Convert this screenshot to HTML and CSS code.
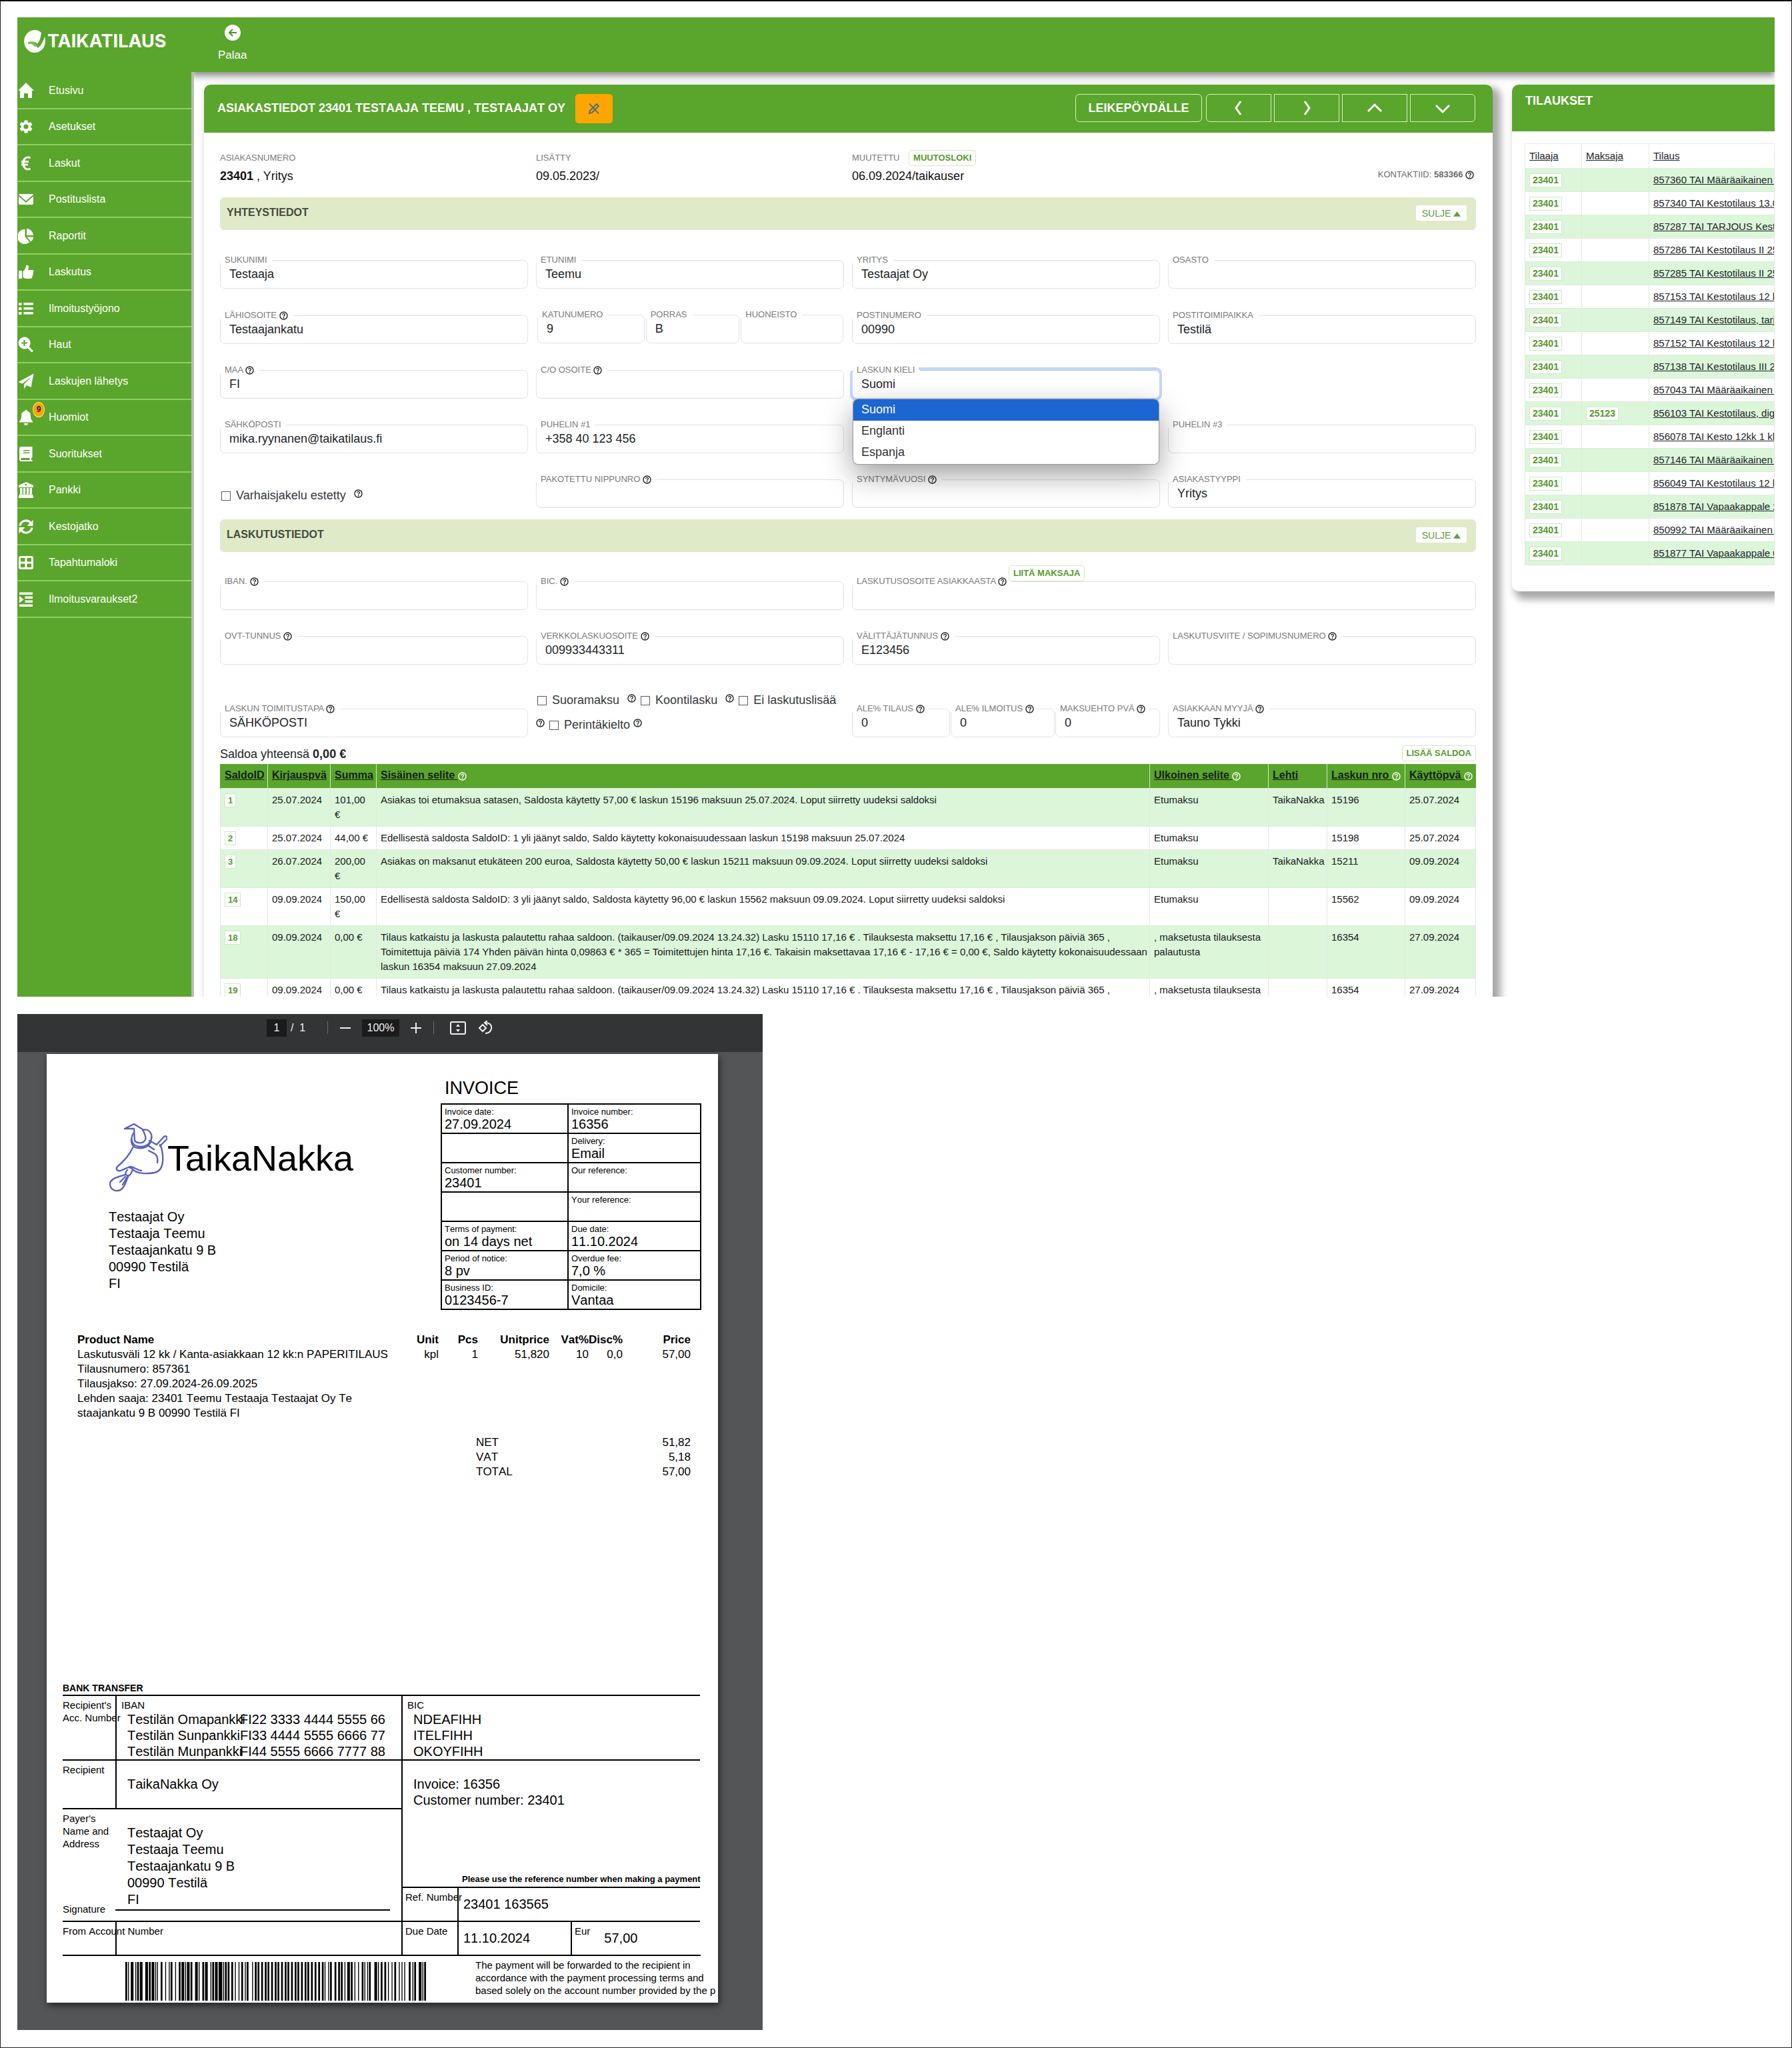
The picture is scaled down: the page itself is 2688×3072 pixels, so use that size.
FILE: index.html
```html
<!DOCTYPE html>
<html lang="fi">
<head>
<meta charset="utf-8">
<title>Taikatilaus – Asiakastiedot</title>
<meta name="viewport" content="width=device-width, initial-scale=1">
<link rel="stylesheet" href="styles.css">
</head>
<body>
<svg class="sprite" aria-hidden="true">
  <symbol id="help" viewBox="0 0 16 16">
    <circle cx="8" cy="8" r="6.8" fill="none" stroke="currentColor" stroke-width="1.7"/>
    <path d="M5.7 6.4c0-3 4.6-3 4.6-.2 0 1.7-2.2 1.6-2.2 3.4" fill="none" stroke="currentColor" stroke-width="1.6"/>
    <circle cx="8.1" cy="11.7" r="1.1" fill="currentColor"/>
  </symbol>
  <symbol id="up" viewBox="0 0 12 8"><path d="M6 0 12 8H0z" fill="currentColor"/></symbol>
</svg>

<div class="frame">
  <div class="app">
    <nav class="sidebar">
      <a class="brand" href="#">
        <svg width="34" height="36" viewBox="0 0 34 36"><path d="M17 1a16 17 0 1 0 13 27c3-4 4-11 2-17-2 6-5 13-10 17-4-6-8-8-15-6 6-5 11-4 14 0 3-4 5-9 6-17A16 17 0 0 0 17 1z" fill="#fff"/><path d="M7 19c5-2 10 0 13 5l-2 3c-3-4-6-6-11-5z" fill="#7fbf5c"/></svg>
        <span>TAIKATILAUS</span>
      </a>
      <ul class="menu">
        <li><a href="#"><svg viewBox="0 0 24 24"><path d="M12 0 24 12h-3v11h-6v-7H9v7H3V12H0z"/></svg>Etusivu</a></li>
        <li><a href="#"><svg viewBox="0 0 24 24"><path d="M19.14 12.94c.04-.3.06-.61.06-.94 0-.32-.02-.64-.07-.94l2.03-1.58a.49.49 0 0 0 .12-.61l-1.92-3.32a.488.488 0 0 0-.59-.22l-2.39.96c-.5-.38-1.03-.7-1.62-.94l-.36-2.54a.484.484 0 0 0-.48-.41h-3.84c-.24 0-.43.17-.47.41l-.36 2.54c-.59.24-1.13.57-1.62.94l-2.39-.96c-.22-.08-.47 0-.59.22L2.74 8.87c-.12.21-.08.47.12.61l2.03 1.58c-.05.3-.09.63-.09.94s.02.64.07.94l-2.03 1.58a.49.49 0 0 0-.12.61l1.92 3.32c.12.22.37.29.59.22l2.39-.96c.5.38 1.03.7 1.62.94l.36 2.54c.05.24.24.41.48.41h3.84c.24 0 .44-.17.47-.41l.36-2.54c.59-.24 1.13-.56 1.62-.94l2.39.96c.22.08.47 0 .59-.22l1.92-3.32c.12-.22.07-.47-.12-.61zM12 15.6a3.6 3.6 0 1 1 0-7.2 3.6 3.6 0 0 1 0 7.2z"/></svg>Asetukset</a></li>
        <li><a href="#"><svg viewBox="0 0 24 24"><path d="M18.500 4c-6-3-10.500 1-10.500 8s5 11 10.500 8M5 9.500h11M5 14h10" fill="none" stroke="#fff" stroke-width="3"/></svg>Laskut</a></li>
        <li><a href="#"><svg viewBox="0 0 24 24"><path d="M1 4h22v1l-11 9.500L1 5z"/><path d="M1 7.500l11 9.500 11-9.500V18a2 2 0 0 1-2 2H3a2 2 0 0 1-2-2z"/></svg>Postituslista</a></li>
        <li><a href="#"><svg viewBox="0 0 24 24"><path d="M10.500 2v11l7 8A11 11 0 1 1 10.500 2z"/><path d="M13 1a10.500 10.500 0 0 1 10 10H13z"/><path d="M13.500 13.500H23c0 3-1.500 5-3.500 7z"/></svg>Raportit</a></li>
        <li><a href="#"><svg viewBox="0 0 24 24"><path d="M1 10h5v12H1z"/><path d="M7.500 11c3-2 4-5 4.500-8 .3-2 4-2 4 1.500 0 2-.5 3-1 4.500h6.500c2 0 2.500 2.500 1 3.500 1 1 .8 2.600-.5 3.300.6 1.200.2 2.400-.8 3 .4 2-.7 3.200-2.700 3.200H13c-2.500 0-3.500-1-5.500-2z"/></svg>Laskutus</a></li>
        <li><a href="#"><svg viewBox="0 0 24 24"><path d="M1 3h4.500v4H1zm7.500 0H23v3.500H8.500zM1 10h4.500v4H1zm7.500 0H23v3.500H8.500zM1 17h4.500v4H1zm7.500 0H23v3.500H8.500z"/></svg>Ilmoitustyöjono</a></li>
        <li><a href="#"><svg viewBox="0 0 24 24"><path d="M9.500.5a9 9 0 0 1 7.200 14.400l6.300 6.300-2.300 2.300-6.300-6.300A9 9 0 1 1 9.500.5zM8.500 5v3.500H5v2h3.500V14h2v-3.500H14v-2h-3.500V5z"/></svg>Haut</a></li>
        <li><a href="#"><svg viewBox="0 0 24 24"><path d="M23.500.500 19.500 21l-6.500-3-4 5.500v-7L20 5 6.500 15.500.5 13z"/></svg>Laskujen lähetys</a></li>
        <li><a href="#"><svg viewBox="0 0 24 24"><path d="M10.500 1h3v1.500c4 1 5.500 4 5.500 7.500 0 4 1 6 3 8v1.500H2V18c2-2 3-4 3-8 0-3.500 1.500-6.500 5.500-7.500zM9 21h6a3 3 0 0 1-6 0z"/></svg>Huomiot<span class="badge">9</span></a></li>
        <li><a href="#"><svg viewBox="0 0 24 24"><path d="M5 1h16.500v16l-1.500 1v3h1.500v2H5a3 3 0 0 1-3-3V4a3 3 0 0 1 3-3zm3 5v1.500h9.500V6zm0 3.500V11h9.500V9.500zM5.500 18a1.400 1.400 0 0 0 0 3H17.500v-3z" fill-rule="evenodd"/></svg>Suoritukset</a></li>
        <li><a href="#"><svg viewBox="0 0 24 24"><path d="M12 0 23 5v3H1V5zm0 3a1.300 1.300 0 1 0 0 2.600A1.300 1.300 0 0 0 12 3zM3 9h3.500v9H3zm4.900 0h3.200v9H7.900zm5 0h3.200v9h-3.200zm4.600 0H21v9h-3.500zM2 18.500h20V21H2zm-1 2h22V24H1z"/></svg>Pankki</a></li>
        <li><a href="#"><svg viewBox="0 0 24 24"><path d="M3 10.500A9 9 0 0 1 19 6.500M21 13.500a9 9 0 0 1-16 4" fill="none" stroke="#fff" stroke-width="3.200"/><path d="M22.500 2v9h-9zM1.500 22v-9h9z"/></svg>Kestojatko</a></li>
        <li><a href="#"><svg viewBox="0 0 24 24"><path d="M4 2h16a3 3 0 0 1 3 3v14a3 3 0 0 1-3 3H4a3 3 0 0 1-3-3V5a3 3 0 0 1 3-3zm0 3v5.500h6.500V5zm9.500 0v5.500H20V5zM4 13.500V19h6.500v-5.500zm9.500 0V19H20v-5.500z" fill-rule="evenodd"/></svg>Tapahtumaloki</a></li>
        <li><a href="#"><svg viewBox="0 0 24 24"><path d="M2 1.500h20v3.500H2zm8.500 6H22v3.500H10.500zm0 6H22V17H10.500zM2 19.500h20V23H2zM2 7l6.500 5.200L2 17.500z"/></svg>Ilmoitusvaraukset2</a></li>
      </ul>
    </nav>

    <div class="main">
      <header class="topbar">
        <a class="back" href="#">
          <svg width="24" height="24" viewBox="0 0 24 24"><circle cx="12" cy="12" r="12" fill="#fff"/><path d="M18 12H7M12 7l-5 5 5 5" fill="none" stroke="#4d9127" stroke-width="2"/></svg>
          Palaa
        </a>
      </header>

      <div class="cards">
        <section class="card">
          <header class="card-head">
            <h1>ASIAKASTIEDOT 23401 TESTAAJA TEEMU , TESTAAJAT OY</h1>
            <button class="edit" type="button" aria-label="Muokkaa"><svg width="18" height="18" viewBox="0 0 18 18"><path d="M2 1.500 16 16.500M2 16l1-4L13 2l3 3L6 15z" fill="none" stroke="#3f6a80" stroke-width="1.800"/></svg></button>
            <div class="head-actions">
              <button class="clip" type="button">LEIKEPÖYDÄLLE</button>
              <button class="step" type="button" aria-label="Edellinen"><svg viewBox="0 0 22 22"><path d="M14 1 7 11l7 10"/></svg></button>
              <button class="step" type="button" aria-label="Seuraava"><svg viewBox="0 0 22 22"><path d="m8 1 7 10-7 10"/></svg></button>
              <button class="step" type="button" aria-label="Ylös"><svg viewBox="0 0 22 22"><path d="m1 16 10-10 10 10"/></svg></button>
              <button class="step" type="button" aria-label="Alas"><svg viewBox="0 0 22 22"><path d="m1 7 10 10L21 7"/></svg></button>
            </div>
          </header>

          <div class="card-body">
            <div class="grid info">
              <div><p class="tag">ASIAKASNUMERO</p><p class="val"><b>23401</b> , Yritys</p></div>
              <div><p class="tag">LISÄTTY</p><p class="val">09.05.2023/</p></div>
              <div><p class="tag">MUUTETTU <button class="mini" type="button">MUUTOSLOKI</button></p><p class="val">06.09.2024/taikauser</p></div>
              <p class="tag contact">KONTAKTIID: <b>583366</b> <svg class="q"><use href="#help"/></svg></p>
            </div>

            <div class="bar"><h2>YHTEYSTIEDOT</h2><button class="sulje" type="button">SULJE <svg><use href="#up"/></svg></button></div>

            <div class="grid">
              <fieldset><legend><label for="f1">SUKUNIMI</label></legend><input id="f1" value="Testaaja"></fieldset>
              <fieldset><legend><label for="f2">ETUNIMI</label></legend><input id="f2" value="Teemu"></fieldset>
              <fieldset><legend><label for="f3">YRITYS</label></legend><input id="f3" value="Testaajat Oy"></fieldset>
              <fieldset><legend><label for="f4">OSASTO</label></legend><input id="f4"></fieldset>

              <fieldset><legend><label for="f5">LÄHIOSOITE</label> <svg class="q"><use href="#help"/></svg></legend><input id="f5" value="Testaajankatu"></fieldset>
              <div class="trio street">
                <fieldset><legend><label for="f6">KATUNUMERO</label></legend><input id="f6" value="9"></fieldset>
                <fieldset><legend><label for="f7">PORRAS</label></legend><input id="f7" value="B"></fieldset>
                <fieldset><legend><label for="f8">HUONEISTO</label></legend><input id="f8"></fieldset>
              </div>
              <fieldset><legend><label for="f9">POSTINUMERO</label></legend><input id="f9" value="00990"></fieldset>
              <fieldset><legend><label for="f10">POSTITOIMIPAIKKA</label></legend><input id="f10" value="Testilä"></fieldset>

              <fieldset><legend><label for="f11">MAA</label> <svg class="q"><use href="#help"/></svg></legend><input id="f11" value="FI"></fieldset>
              <fieldset><legend><label for="f12">C/O OSOITE</label> <svg class="q"><use href="#help"/></svg></legend><input id="f12"></fieldset>
              <fieldset class="open"><legend><label for="f13">LASKUN KIELI</label></legend>
                <select id="f13"><option>Suomi</option></select>
                <ul class="options" role="listbox">
                  <li role="option" aria-selected="true">Suomi</li>
                  <li role="option">Englanti</li>
                  <li role="option">Espanja</li>
                </ul>
              </fieldset>

              <fieldset class="first"><legend><label for="f14">SÄHKÖPOSTI</label></legend><input id="f14" value="mika.ryynanen@taikatilaus.fi"></fieldset>
              <fieldset><legend><label for="f15">PUHELIN #1</label></legend><input id="f15" value="+358 40 123 456"></fieldset>
              <fieldset class="last"><legend><label for="f16">PUHELIN #3</label></legend><input id="f16"></fieldset>

              <div class="checks"><label><input type="checkbox"> Varhaisjakelu estetty</label> <svg class="q far"><use href="#help"/></svg></div>
              <fieldset><legend><label for="f17">PAKOTETTU NIPPUNRO</label> <svg class="q"><use href="#help"/></svg></legend><input id="f17"></fieldset>
              <fieldset><legend><label for="f18">SYNTYMÄVUOSI</label> <svg class="q"><use href="#help"/></svg></legend><input id="f18"></fieldset>
              <fieldset><legend><label for="f19">ASIAKASTYYPPI</label></legend><input id="f19" value="Yritys"></fieldset>
            </div>

            <div class="bar second"><h2>LASKUTUSTIEDOT</h2><button class="sulje" type="button">SULJE <svg><use href="#up"/></svg></button></div>

            <div class="grid">
              <fieldset><legend><label for="g1">IBAN.</label> <svg class="q"><use href="#help"/></svg></legend><input id="g1"></fieldset>
              <fieldset><legend><label for="g2">BIC.</label> <svg class="q"><use href="#help"/></svg></legend><input id="g2"></fieldset>
              <fieldset class="wide"><legend><label for="g3">LASKUTUSOSOITE ASIAKKAASTA</label> <svg class="q"><use href="#help"/></svg></legend><button class="mini payer" type="button">LIITÄ MAKSAJA</button><input id="g3"></fieldset>

              <fieldset><legend><label for="g4">OVT-TUNNUS</label> <svg class="q"><use href="#help"/></svg></legend><input id="g4"></fieldset>
              <fieldset><legend><label for="g5">VERKKOLASKUOSOITE</label> <svg class="q"><use href="#help"/></svg></legend><input id="g5" value="009933443311"></fieldset>
              <fieldset><legend><label for="g6">VÄLITTÄJÄTUNNUS</label> <svg class="q"><use href="#help"/></svg></legend><input id="g6" value="E123456"></fieldset>
              <fieldset><legend><label for="g7">LASKUTUSVIITE / SOPIMUSNUMERO</label> <svg class="q"><use href="#help"/></svg></legend><input id="g7"></fieldset>

              <fieldset><legend><label for="g8">LASKUN TOIMITUSTAPA</label> <svg class="q"><use href="#help"/></svg></legend><input id="g8" value="SÄHKÖPOSTI"></fieldset>
              <div class="checks terms">
                <label><input type="checkbox"> Suoramaksu</label> <svg class="q far"><use href="#help"/></svg>
                <label><input type="checkbox"> Koontilasku</label> <svg class="q far"><use href="#help"/></svg>
                <label><input type="checkbox"> Ei laskutuslisää</label> <svg class="q"><use href="#help"/></svg>
                <label><input type="checkbox"> Perintäkielto</label> <svg class="q"><use href="#help"/></svg>
              </div>
              <div class="trio rates">
                <fieldset><legend><label for="g9">ALE% TILAUS</label> <svg class="q"><use href="#help"/></svg></legend><input id="g9" value="0"></fieldset>
                <fieldset><legend><label for="g10">ALE% ILMOITUS</label> <svg class="q"><use href="#help"/></svg></legend><input id="g10" value="0"></fieldset>
                <fieldset><legend><label for="g11">MAKSUEHTO PVÄ</label> <svg class="q"><use href="#help"/></svg></legend><input id="g11" value="0"></fieldset>
              </div>
              <fieldset><legend><label for="g12">ASIAKKAAN MYYJÄ</label> <svg class="q"><use href="#help"/></svg></legend><input id="g12" value="Tauno Tykki"></fieldset>
            </div>

            <div class="saldo-line"><p>Saldoa yhteensä <b>0,00 €</b></p><button class="mini" type="button">LISÄÄ SALDOA</button></div>

            <table class="saldo">
              <colgroup><col class="c1"><col class="c2"><col class="c3"><col><col class="c5"><col class="c6"><col class="c7"><col class="c8"></colgroup>
              <thead><tr>
                <th><a href="#">SaldoID</a></th><th><a href="#">Kirjauspvä</a></th><th><a href="#">Summa</a></th>
                <th><a href="#">Sisäinen selite </a><svg class="q"><use href="#help"/></svg></th>
                <th><a href="#">Ulkoinen selite </a><svg class="q"><use href="#help"/></svg></th>
                <th><a href="#">Lehti</a></th>
                <th><a href="#">Laskun nro </a><svg class="q"><use href="#help"/></svg></th>
                <th><a href="#">Käyttöpvä </a><svg class="q"><use href="#help"/></svg></th>
              </tr></thead>
              <tbody>
                <tr><td><a class="id" href="#">1</a></td><td>25.07.2024</td><td>101,00 €</td><td>Asiakas toi etumaksua satasen, Saldosta käytetty 57,00 € laskun 15196 maksuun 25.07.2024. Loput siirretty uudeksi saldoksi</td><td>Etumaksu</td><td>TaikaNakka</td><td>15196</td><td>25.07.2024</td></tr>
                <tr><td><a class="id" href="#">2</a></td><td>25.07.2024</td><td>44,00 €</td><td>Edellisestä saldosta SaldoID: 1 yli jäänyt saldo, Saldo käytetty kokonaisuudessaan laskun 15198 maksuun 25.07.2024</td><td>Etumaksu</td><td></td><td>15198</td><td>25.07.2024</td></tr>
                <tr><td><a class="id" href="#">3</a></td><td>26.07.2024</td><td>200,00 €</td><td>Asiakas on maksanut etukäteen 200 euroa, Saldosta käytetty 50,00 € laskun 15211 maksuun 09.09.2024. Loput siirretty uudeksi saldoksi</td><td>Etumaksu</td><td>TaikaNakka</td><td>15211</td><td>09.09.2024</td></tr>
                <tr><td><a class="id" href="#">14</a></td><td>09.09.2024</td><td>150,00 €</td><td>Edellisestä saldosta SaldoID: 3 yli jäänyt saldo, Saldosta käytetty 96,00 € laskun 15562 maksuun 09.09.2024. Loput siirretty uudeksi saldoksi</td><td>Etumaksu</td><td></td><td>15562</td><td>09.09.2024</td></tr>
                <tr><td><a class="id" href="#">18</a></td><td>09.09.2024</td><td>0,00 €</td><td class="long">Tilaus katkaistu ja laskusta palautettu rahaa saldoon. (taikauser/09.09.2024 13.24.32) Lasku 15110 17,16 € . Tilauksesta maksettu 17,16 € , Tilausjakson päiviä 365 ,<br>Toimitettuja päiviä 174 Yhden päivän hinta 0,09863 € * 365 = Toimitettujen hinta 17,16 €. Takaisin maksettavaa 17,16 € - 17,16 € = 0,00 €, Saldo käytetty kokonaisuudessaan<br>laskun 16354 maksuun 27.09.2024</td><td>, maksetusta tilauksesta palautusta</td><td></td><td>16354</td><td>27.09.2024</td></tr>
                <tr><td><a class="id" href="#">19</a></td><td>09.09.2024</td><td>0,00 €</td><td class="long">Tilaus katkaistu ja laskusta palautettu rahaa saldoon. (taikauser/09.09.2024 13.24.32) Lasku 15110 17,16 € . Tilauksesta maksettu 17,16 € , Tilausjakson päiviä 365 ,</td><td class="long">, maksetusta tilauksesta</td><td></td><td>16354</td><td>27.09.2024</td></tr>
              </tbody>
            </table>
          </div>
        </section>

        <section class="card orders">
          <header class="card-head"><h1>TILAUKSET</h1></header>
          <div class="orders-body">
            <table class="order-list">
              <colgroup><col class="o1"><col class="o2"><col></colgroup>
              <thead><tr><th><a href="#">Tilaaja</a></th><th><a href="#">Maksaja</a></th><th><a href="#">Tilaus</a></th></tr></thead>
              <tbody>
                <tr><td><a class="id" href="#">23401</a></td><td></td><td><a href="#">857360 TAI Määräaikainen 1</a></td></tr>
                <tr><td><a class="id" href="#">23401</a></td><td></td><td><a href="#">857340 TAI Kestotilaus 13.0</a></td></tr>
                <tr><td><a class="id" href="#">23401</a></td><td></td><td><a href="#">857287 TAI TARJOUS Kest</a></td></tr>
                <tr><td><a class="id" href="#">23401</a></td><td></td><td><a href="#">857286 TAI Kestotilaus II 25</a></td></tr>
                <tr><td><a class="id" href="#">23401</a></td><td></td><td><a href="#">857285 TAI Kestotilaus II 25</a></td></tr>
                <tr><td><a class="id" href="#">23401</a></td><td></td><td><a href="#">857153 TAI Kestotilaus 12 k</a></td></tr>
                <tr><td><a class="id" href="#">23401</a></td><td></td><td><a href="#">857149 TAI Kestotilaus, tarj</a></td></tr>
                <tr><td><a class="id" href="#">23401</a></td><td></td><td><a href="#">857152 TAI Kestotilaus 12 k</a></td></tr>
                <tr><td><a class="id" href="#">23401</a></td><td></td><td><a href="#">857138 TAI Kestotilaus III 2</a></td></tr>
                <tr><td><a class="id" href="#">23401</a></td><td></td><td><a href="#">857043 TAI Määräaikainen 1</a></td></tr>
                <tr><td><a class="id" href="#">23401</a></td><td><a class="id" href="#">25123</a></td><td><a href="#">856103 TAI Kestotilaus, digi</a></td></tr>
                <tr><td><a class="id" href="#">23401</a></td><td></td><td><a href="#">856078 TAI Kesto 12kk 1 kk</a></td></tr>
                <tr><td><a class="id" href="#">23401</a></td><td></td><td><a href="#">857146 TAI Määräaikainen 1</a></td></tr>
                <tr><td><a class="id" href="#">23401</a></td><td></td><td><a href="#">856049 TAI Kestotilaus 12 k</a></td></tr>
                <tr><td><a class="id" href="#">23401</a></td><td></td><td><a href="#">851878 TAI Vapaakappale 2</a></td></tr>
                <tr><td><a class="id" href="#">23401</a></td><td></td><td><a href="#">850992 TAI Määräaikainen 1</a></td></tr>
                <tr><td><a class="id" href="#">23401</a></td><td></td><td><a href="#">851877 TAI Vapaakappale 0</a></td></tr>
              </tbody>
            </table>
          </div>
        </section>
      </div>
    </div>
  </div>

  <div class="viewer">
    <div class="toolbar">
      <input class="page-no" value="1" aria-label="Page"><span class="of">/&nbsp; 1</span>
      <i class="sep"></i>
      <button type="button" aria-label="Zoom out"><svg width="16" height="16" viewBox="0 0 16 16"><path d="M0 8h16"/></svg></button>
      <span class="zoom">100%</span>
      <button type="button" aria-label="Zoom in"><svg width="16" height="16" viewBox="0 0 16 16"><path d="M0 8h16M8 0v16"/></svg></button>
      <i class="sep"></i>
      <button class="fit" type="button" aria-label="Fit to page"><svg width="24" height="20" viewBox="0 0 24 20"><rect x="1" y="1" width="22" height="18" rx="2"/><path d="m9 8 3-4 3 4zM9 12l3 4 3-4z" fill="#f1f1f1" stroke="none"/></svg></button>
      <button type="button" aria-label="Rotate"><svg width="22" height="22" viewBox="0 0 22 22"><path d="m7 6 5 5-5 5-5-5zM11 3c6 0 10 3 9 9-1 4-4 7-9 7M14 0l-4 3 4 4"/></svg></button>
    </div>
    <div class="desk">
      <article class="paper">
        <div class="top">
          <div class="sender">
            <div class="logo">
              <svg width="88" height="104" viewBox="0 0 88 104" fill="none" stroke="#5c62c0" stroke-width="2.400" stroke-linejoin="round" stroke-linecap="round">
                <path d="M24 8 38 1l13 8c4 10 6 13 3 17-4 5-12 4-15 0L38 8z"/>
                <path d="M37 15c-6 10-1 20 11 20 14 0 20-14 14-22-3-4-8-4-11-3M34 24c-1 9 5 15 17 13 9-2 13-8 13-16"/>
                <path d="M37 35C31 48 24 56 13 65c-3 4 0 7 5 6 10-4 13-8 18-2 6 7 22 7 33 5 12-3 13-16 12-27-1-8-2-12-4-15"/>
                <path d="m61 26 11 6 11-12c3-2 6 1 4 4L77 34M60 34c3 1 5 4 8 5M60 41c9 4 15 6 13 18M31 65c8 0 12 6 18 6"/>
                <path d="M28 70c-2 2-4 4-2 7 3 3 7 1 8-3l2-4M25 77C14 80 2 83 2 91c0 6 5 11 12 10 9-1 11-12 16-23M25 80l-8 8M28 80l-7 12"/>
              </svg>
              <span>TaikaNakka</span>
            </div>
            <address>Testaajat Oy<br>Testaaja Teemu<br>Testaajankatu 9 B<br>00990 Testilä<br>FI</address>
          </div>
          <div class="facts-wrap">
            <h2>INVOICE</h2>
            <table class="facts">
              <tr><td><small>Invoice date:</small>27.09.2024</td><td><small>Invoice number:</small>16356</td></tr>
              <tr><td></td><td><small>Delivery:</small>Email</td></tr>
              <tr><td><small>Customer number:</small>23401</td><td><small>Our reference:</small></td></tr>
              <tr><td></td><td><small>Your reference:</small></td></tr>
              <tr><td><small>Terms of payment:</small>on 14 days net</td><td><small>Due date:</small>11.10.2024</td></tr>
              <tr><td><small>Period of notice:</small>8 pv</td><td><small>Overdue fee:</small>7,0 %</td></tr>
              <tr><td><small>Business ID:</small>0123456-7</td><td><small>Domicile:</small>Vantaa</td></tr>
            </table>
          </div>
        </div>

        <table class="lines">
          <colgroup><col><col class="l2"><col class="l3"><col class="l4"><col class="l5"><col class="l6"><col class="l7"></colgroup>
          <thead><tr><th>Product Name</th><th>Unit</th><th>Pcs</th><th>Unitprice</th><th>Vat%</th><th>Disc%</th><th>Price</th></tr></thead>
          <tbody><tr><td>Laskutusväli 12 kk / Kanta-asiakkaan 12 kk:n PAPERITILAUS<br>Tilausnumero: 857361<br>Tilausjakso: 27.09.2024-26.09.2025<br>Lehden saaja: 23401 Teemu Testaaja Testaajat Oy Te<br>staajankatu 9 B 00990 Testilä FI</td><td>kpl</td><td>1</td><td>51,820</td><td>10</td><td>0,0</td><td>57,00</td></tr></tbody>
        </table>
        <dl class="totals"><dt>NET</dt><dd>51,82</dd><dt>VAT</dt><dd>5,18</dd><dt>TOTAL</dt><dd>57,00</dd></dl>

        <h3 class="slip-title">BANK TRANSFER</h3>
        <div class="slip">
          <div class="left">
            <div class="row accounts">
              <p class="cap">Recipient's<br>Acc. Number</p>
              <div class="cell"><p class="cap">IBAN</p>
                <div class="banks"><span>Testilän Omapankki</span><span>FI22 3333 4444 5555 66</span><span>Testilän Sunpankki</span><span>FI33 4444 5555 6666 77</span><span>Testilän Munpankki</span><span>FI44 5555 6666 7777 88</span></div>
              </div>
            </div>
            <div class="row recipient"><p class="cap">Recipient</p><div class="cell">TaikaNakka Oy</div></div>
            <div class="row payer-row">
              <p class="cap">Payer's<br>Name and<br>Address</p>
              <address>Testaajat Oy<br>Testaaja Teemu<br>Testaajankatu 9 B<br>00990 Testilä<br>FI</address>
              <p class="cap sign">Signature</p><i class="sign-line"></i>
            </div>
            <div class="row from"><p class="cap">From Account Number</p><div class="cell"></div></div>
          </div>
          <div class="right">
            <div class="bic"><p class="cap">BIC</p><p class="codes">NDEAFIHH<br>ITELFIHH<br>OKOYFIHH</p></div>
            <div class="msg"><p>Invoice: 16356<br>Customer number: 23401</p><strong>Please use the reference number when making a payment</strong></div>
            <div class="pay"><p class="cap">Ref. Number</p><div class="cell">23401 163565</div></div>
            <div class="pay due"><p class="cap">Due Date</p><div class="cell">11.10.2024</div><div class="cell eur"><span class="cap">Eur</span>57,00</div></div>
          </div>
        </div>
        <div class="foot">
          <svg class="barcode" viewBox="0 0 332 10" preserveAspectRatio="none" role="img" aria-label="Virtual bar code"><path d="M0 5H332" stroke="#000" stroke-width="10" stroke-dasharray="2 1 1 2 3 2 1 1 2 1 3 3 3 1 2 1 3 1 1 1 1 3 2 3 1 3 1 1 2 3 1 3 2 1 3 1 1 1 3 1 2 3 3 1 1 3 2 1 3 3 1 1 2 1 3 1 4 1 1 1 2 1 2 2 2 2 1 3 1 2 2 2 1 1 2 4 1 2 2 1 2 2 2 2 2 1 2 2 2 2 2 1 2 2 2 2 2 1 2 2 2 2 2 1 2 2 2 2 2 1 2 2 2 2 2 2 2 2 2 1 1 3 1 1 2 3 2 2 2 1 2 2 1 2 3 1 2 2 1 3 1 3 2 1 1 2 1 1 2 4 3 1 1 2 2 2 2 2 1 3 1 2 2 3 1 2 1 2 1 4 2 2 1 1 2 3 3 1 1 1 2"/></svg>
          <p>The payment will be forwarded to the recipient in<br>accordance with the payment processing terms and<br>based solely on the account number provided by the p</p>
        </div>
      </article>
    </div>
  </div>
</div>
</body>
</html>
```
FILE: styles.css
```css
* { box-sizing: border-box; }

body {
  margin: 0;
  font-family: "Liberation Sans", Arial, sans-serif;
  font-size: 18px;
  color: #212529;
  background: #fff;
}

h1, h2, h3, p, ul, dl, dd, address { margin: 0; padding: 0; font-style: normal; }
a { color: inherit; }
button, input, select { font: inherit; color: inherit; margin: 0; }
button { cursor: pointer; }
.sprite { display: none; }

.frame {
  min-height: 100vh;
  padding: 24px 25px 25px;
  border: 1px solid #222;
  border-top: 2px solid #000;
}

/* Application window */
.app {
  display: grid;
  grid-template-columns: 261px minmax(0, 1fr);
  height: 1469px;
  overflow: hidden;
}

.sidebar {
  position: relative;
  z-index: 2;
  background: #5aa52b;
  color: #fff;
  box-shadow: 4px 82px 0 #b9bcb7;
  clip-path: inset(0 -4px 0 0);
}
.brand {
  display: flex;
  align-items: center;
  gap: 2px;
  height: 83px;
  padding: 0 0 12px 9px;
  font: 700 27px/36px Inter, sans-serif;
  text-decoration: none;
}
.menu { list-style: none; }
.menu li { height: 55px; border-bottom: 2px solid #8fd065; }
.menu li:nth-child(even) { height: 54px; }
.menu a {
  position: relative;
  display: flex;
  align-items: center;
  gap: 22px;
  height: 100%;
  padding-left: 1px;
  font-size: 16px;
  text-decoration: none;
}
.menu svg { width: 24px; height: 24px; fill: #fff; }
.badge {
  position: absolute;
  left: 23px;
  top: 3px;
  width: 18px;
  height: 23px;
  border: 1px solid #ffe0a0;
  border-radius: 50%;
  background: #ffa200;
  color: #222;
  font-size: 12px;
  font-weight: 700;
  line-height: 21px;
  text-align: center;
}

.main { min-width: 0; }
.topbar {
  position: relative;
  height: 82px;
  background: #5aa52b;
  box-shadow: 0 6px 10px #8c8c8c;
}
.back {
  display: inline-flex;
  flex-direction: column;
  align-items: center;
  gap: 12px;
  padding: 11px 0 0 40px;
  color: #fff;
  font-size: 17px;
  line-height: 20px;
  text-decoration: none;
}

.cards {
  display: grid;
  grid-template-columns: minmax(0, 1933fr) minmax(0, 394fr);
  align-items: start;
  gap: 29px;
  padding: 19px 0 0 19px;
}
.card {
  position: relative;
  border-radius: 10px;
  background: #fff;
  box-shadow: 8px 8px 12px 4px #a8a8a8;
}
.card-head {
  display: flex;
  align-items: center;
  height: 72px;
  padding: 0 26px 0 20px;
  border-radius: 10px 10px 0 0;
  background: #5aa52b;
  color: #fff;
}
.card-head h1 { font-size: 18px; line-height: 22px; padding-bottom: 2px; white-space: nowrap; font-kerning: none; }
.edit {
  display: grid;
  place-items: center;
  width: 56px;
  height: 44px;
  margin-left: 15px;
  border: 0;
  border-radius: 5px;
  background: #ffa500;
}
.head-actions { display: flex; gap: 4px; margin-left: auto; padding-bottom: 2px; }
.head-actions button {
  height: 42px;
  padding: 0;
  border: 1px solid #d5f0c6;
  background: none;
  color: #fff;
}
.head-actions .clip { width: 190px; margin-right: 2px; border-radius: 6px; font-weight: 700; }
.step { display: grid; place-items: center; width: 98px; }
.step:nth-child(2) { border-radius: 6px 0 0 6px; }
.step:last-child { border-radius: 0 6px 6px 0; }
.step svg { width: 22px; height: 22px; fill: none; stroke: #fff; stroke-width: 3; }

.card-body { padding: 26px 25px 0 24px; }

.grid {
  display: grid;
  grid-template-columns: repeat(4, minmax(0, 1fr));
  gap: 31px 12px;
  align-items: end;
}
.info { align-items: center; }
.tag { font-size: 13px; line-height: 24px; color: #7b7b7b; }
.tag .mini { margin-left: 10px; }
.contact { padding: 20px 3px 0 0; text-align: right; color: #6b6b6b; }
.val { line-height: 30px; color: #111; }

.q { width: 13px; height: 13px; vertical-align: -3px; color: #222; }

.mini {
  height: 24px;
  padding: 0 6px;
  border: 1px solid #cdebc2;
  border-radius: 4px;
  background: #fff;
  color: #549c2a;
  font-size: 13px;
  font-weight: 700;
  line-height: 20px;
  white-space: nowrap;
}

.bar {
  display: flex;
  justify-content: space-between;
  align-items: center;
  height: 49px;
  margin: 17px 0 37px;
  padding: 0 14px 2px 10px;
  border-radius: 6px;
  background: #dfeac8;
}
.bar.second { margin-bottom: 36px; }
.bar h2 { font-size: 16px; line-height: 20px; color: #454b3c; padding-bottom: 2px; }
.sulje {
  width: 76px;
  height: 23px;
  padding: 0;
  border: 0;
  border-radius: 3px;
  background: #fff;
  color: #5f9e3e;
  font-size: 14px;
}
.sulje svg { width: 11px; height: 8px; }

fieldset {
  position: relative;
  min-width: 0;
  margin: 0;
  padding: 0;
  border: 1px solid #e0e2e4;
  border-radius: 7px;
}
legend {
  padding: 0 8px 0 6px;
  font-size: 13px;
  line-height: 16px;
  height: 16px;
  color: #7b7b7b;
  white-space: nowrap;
}
fieldset input, fieldset select {
  display: block;
  width: 100%;
  height: 34px;
  padding: 0 13px 8px;
  border: 0;
  outline: 0;
  background: none;
  appearance: none;
}
.trio { display: grid; gap: 2px; }
.street { grid-template-columns: 161fr 141fr 154fr; padding: 0 1px 1px 2px; }
.rates { grid-template-columns: 147fr 156fr 157fr; gap: 1px; }
.rates legend { padding-right: 4px; }
.first { grid-column: 1; }
.last { grid-column: 4; }
.wide { grid-column: span 2; }
.payer { position: absolute; left: 234px; top: -32px; }

.open { border-color: #a9c6f5; }
.open::after {
  content: "";
  position: absolute;
  inset: -12px -4px -4px;
  border: 4px solid #c3d8fa;
  border-radius: 9px;
  clip-path: polygon(103px 0, 100% 0, 100% 100%, 0 100%, 0 5px, 6px 5px, 6px 10px, 103px 10px);
  pointer-events: none;
}
.options {
  position: absolute;
  z-index: 5;
  top: 36px;
  left: 1px;
  right: 1px;
  padding-bottom: 1px;
  overflow: hidden;
  list-style: none;
  border-radius: 7px;
  background: #fff;
  color: #333;
  box-shadow: 0 0 1px 1px #9a9a9a, 0 16px 44px rgba(0, 0, 0, .38);
}
.options li { height: 32px; padding: 0 12px; line-height: 31px; }
.options li[aria-selected] { background: #1b66d2; color: #fff; }

.checks { line-height: 37px; color: #333a40; }
.checks label { white-space: nowrap; }
.checks input {
  width: 14px;
  height: 14px;
  margin: 0 3px 0 2px;
  border: 1px solid #555b66;
  background: #fff;
  appearance: none;
  vertical-align: -2px;
}
.checks .q { vertical-align: 2px; }
.checks .far { margin-left: 7px; }
.terms { padding-top: 4px; }

.saldo-line { display: flex; justify-content: space-between; align-items: center; height: 24px; margin: 12px 0 4px; }
.saldo-line p { padding-top: 3px; }

table { border-collapse: collapse; table-layout: fixed; width: 100%; }
th { text-align: left; }
.saldo { font-size: 15px; line-height: 22px; color: #16201a; }
.saldo th {
  height: 36px;
  padding: 0 0 1px 6px;
  border-left: 1px solid #cdeabf;
  background: #5aa52b;
  font-size: 16px;
  white-space: nowrap;
}
.saldo th:first-child { border-left-color: #5aa52b; }
.saldo th .q { color: #fff; }
.saldo td, .order-list td { padding: 6px; border: 1px solid #dfeadf; vertical-align: top; }
.saldo tbody tr:nth-child(odd), .order-list tbody tr:nth-child(odd) { background: #dcf6da; }
.c1 { width: 71px; }
.c2 { width: 94px; }
.c3 { width: 69px; }
.c5 { width: 178px; }
.c6 { width: 88px; }
.c7 { width: 117px; }
.c8 { width: 106px; }
.saldo .long { padding-right: 0; white-space: nowrap; }
.id {
  display: inline-block;
  height: 21px;
  padding: 0 4px;
  border: 1px solid #cfeac6;
  background: #fff;
  color: #559a2f;
  font-size: 13px;
  font-weight: 700;
  line-height: 19px;
  text-decoration: none;
}

.orders, .orders .card-head { border-top-right-radius: 0; border-bottom-right-radius: 0; }
.orders .card-head { height: 70px; padding-bottom: 20px; }
.orders-body { padding: 18px 0 39px 19px; overflow: hidden; }
.order-list { font-size: 15px; line-height: 22px; white-space: nowrap; }
.order-list th { height: 37px; padding: 0 0 0 6px; border: 1px solid #e5ebe5; font-weight: 400; }
.order-list td { padding-right: 0; overflow: hidden; }
.order-list .id { font-size: 14px; }
.o1 { width: 85px; }
.o2 { width: 101px; }

/* Document viewer */
.viewer {
  max-width: 1118px;
  margin-top: 26px;
  background: #535557;
}
.toolbar {
  display: flex;
  align-items: center;
  height: 57px;
  padding: 0 0 16px 374px;
  background: #323436;
  color: #f1f1f1;
  font-size: 16px;
}
.toolbar button { display: grid; place-items: center; padding: 0; border: 0; background: none; }
.toolbar svg { fill: none; stroke: #f1f1f1; stroke-width: 2; }
.page-no { width: 30px; height: 26px; padding: 0; border: 0; background: #191b1c; text-align: center; }
.of { width: 61px; padding-left: 6px; }
.sep { width: 1px; height: 19px; margin-right: 18px; background: #6a6c6e; }
.zoom { width: 56px; margin: 0 17px; background: #191b1c; line-height: 26px; text-align: center; }
.zoom + button { margin-right: 18px; }
.toolbar .fit { margin: 0 18px 0 6px; }

.desk { padding: 3px 67px 41px 44px; }
.paper {
  overflow: hidden;
  padding: 35px 0 0 24px;
  background: #fff;
  color: #000;
  font-size: 20px;
  font-kerning: none;
  box-shadow: 2px 4px 10px rgba(0, 0, 0, .6);
}
.top { display: flex; justify-content: space-between; padding-right: 25px; }
.sender { padding: 69px 0 0 69px; }
.logo { display: flex; align-items: center; height: 104px; }
.logo span { font: 54px/80px "Liberation Sans Narrow", "Liberation Sans", sans-serif; }
.logo svg { flex: none; }
address { line-height: 25px; }
.sender address { margin-top: 24px; }
.facts-wrap { width: 391px; }
.facts-wrap h2 { padding-left: 6px; font-size: 27px; font-weight: 400; line-height: 32px; margin-bottom: 7px; }
.facts td { height: 44px; padding: 2px 0 0 4px; border: 2px solid #000; line-height: 20px; vertical-align: top; }
.facts td:first-child { width: 190px; }
.facts small { display: block; font-size: 13px; line-height: 17px; }

.lines { width: 920px; margin: 34px 0 0 22px; font-size: 17px; line-height: 22px; }
.lines th, .lines td { padding: 0; text-align: right; vertical-align: top; white-space: nowrap; }
.lines th:first-child, .lines td:first-child { text-align: left; }
.l2 { width: 58px; }
.l3 { width: 59px; }
.l4 { width: 107px; }
.l5 { width: 59px; }
.l6 { width: 51px; }
.l7 { width: 102px; }
.totals {
  display: grid;
  grid-template-columns: 1fr auto;
  width: 322px;
  margin: 22px 0 0 620px;
  font-size: 17px;
  line-height: 22px;
}
.totals dd { text-align: right; }

.slip-title { margin-top: 303px; font-size: 14px; line-height: 20px; }
.slip {
  display: grid;
  grid-template-columns: 508px 448px;
  line-height: 24px;
  border-bottom: 2px solid #000;
  width: 957px;
}
.cap { font-size: 15px; line-height: 19px; white-space: nowrap; }
.row { display: grid; grid-template-columns: 79px 1fr; border-top: 2px solid #000; }
.row > .cap { padding-top: 4px; }
.row .cell { border-left: 2px solid #000; }
.accounts { height: 97px; }
.accounts .cell { padding: 4px 0 0 7px; }
.banks { display: grid; grid-template-columns: 169px 1fr; padding-left: 9px; white-space: nowrap; }
.recipient { height: 73px; }
.recipient .cell { padding: 23px 0 0 16px; }
.payer-row { height: 169px; grid-template-rows: 140px 1fr; }
.payer-row address { padding: 23px 0 0 18px; }
.row > .sign { padding-top: 0; }
.sign-line { height: 12px; width: 412px; border-bottom: 2px solid #000; }
.from { height: 51px; }
.right { border-left: 2px solid #000; }
.bic { height: 97px; padding: 4px 0 0 7px; border-top: 2px solid #000; }
.codes { padding-left: 9px; }
.msg { display: flex; flex-direction: column; justify-content: space-between; height: 191px; padding: 23px 0 2px 16px; border-top: 2px solid #000; }
.msg strong { padding-left: 73px; font-size: 13px; line-height: 18px; white-space: nowrap; }
.pay { display: grid; grid-template-columns: 82px 1fr; height: 51px; border-top: 2px solid #000; }
.pay > .cap { padding: 4px 0 0 4px; }
.pay .cell { padding: 12px 0 0 7px; border-left: 2px solid #000; }
.due { grid-template-columns: 82px 170px 1fr; }
.pay .eur { display: flex; gap: 21px; padding-left: 4px; }
.eur .cap { margin-top: -8px; }

.foot { display: flex; padding: 9px 0 0 94px; height: 70px; }
.barcode { flex: none; width: 451px; height: 58px; }
.foot p { padding-left: 74px; margin-top: -5px; font-size: 15px; line-height: 19px; white-space: nowrap; }
```
